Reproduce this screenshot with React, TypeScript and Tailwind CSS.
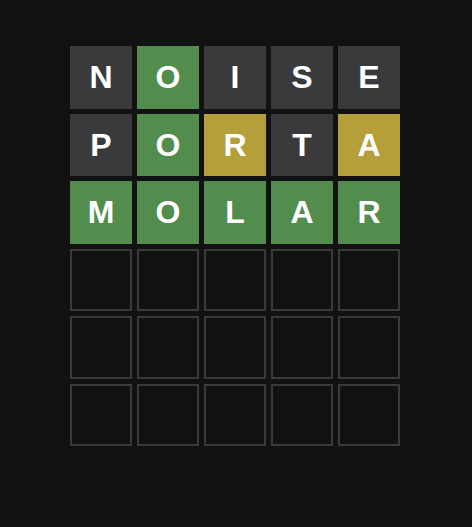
const rows: [string, string][][] = [
  [["N", "x"], ["O", "g"], ["I", "x"], ["S", "x"], ["E", "x"]],
  [["P", "x"], ["O", "g"], ["R", "y"], ["T", "x"], ["A", "y"]],
  [["M", "g"], ["O", "g"], ["L", "g"], ["A", "g"], ["R", "g"]],
];

function Tile({ letter, state }: { letter?: string; state?: string }) {
  if (!letter) {
    return <div className="border-2 border-[#3a3a3c]" />;
  }
  const bg =
    state === "g" ? "bg-[#538d4e]" : state === "y" ? "bg-[#b59f3b]" : "bg-[#3a3a3c]";
  return (
    <div
      className={`${bg} flex items-center justify-center text-[32px] font-bold text-white`}
    >
      {letter}
    </div>
  );
}

export default function App() {
  const empty = Array.from({ length: 15 });
  return (
    <div className="min-h-[527px] bg-[#121213] pt-[46px] pl-[70px] font-['Liberation_Sans',Arial,sans-serif]">
      <div className="grid h-[400px] w-[330px] grid-cols-5 grid-rows-6 gap-[5px]">
        {rows.map((row, r) =>
          row.map(([l, s], c) => <Tile key={`${r}-${c}`} letter={l} state={s} />)
        )}
        {empty.map((_, i) => (
          <Tile key={`e-${i}`} />
        ))}
      </div>
    </div>
  );
}
